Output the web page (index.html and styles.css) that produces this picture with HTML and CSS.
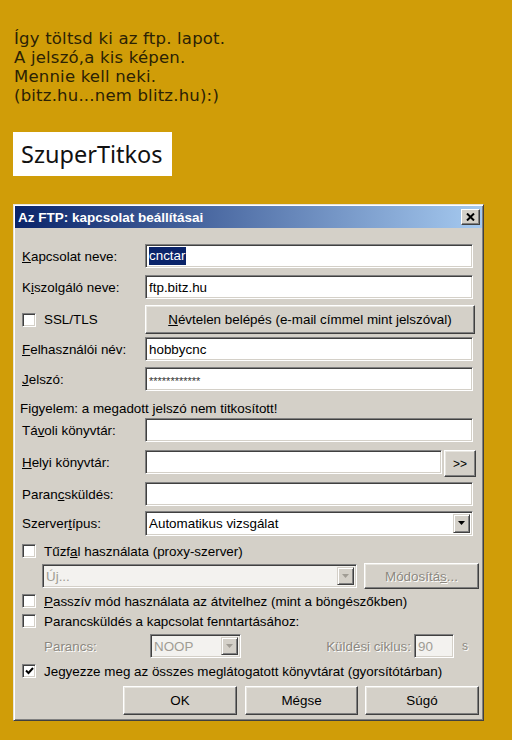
FILE: index.html
```html
<!DOCTYPE html>
<html lang="hu">
<head>
<meta charset="utf-8">
<title>FTP</title>
<link rel="stylesheet" href="styles.css">
</head>
<body>
<div class="intro">
  <p>Így töltsd ki az ftp. lapot.</p>
  <p>A jelszó,a kis képen.</p>
  <p>Mennie kell neki.</p>
  <p>(bitz.hu...nem blitz.hu):)</p>
</div>
<div class="secret">SzuperTitkos</div>

<div class="dialog">
  <div class="titlebar">
    <span class="title">Az FTP: kapcsolat beállításai</span>
    <span class="close"><svg width="9" height="8" viewBox="0 0 9 8"><path d="M1 0.5 L8 7.5 M8 0.5 L1 7.5" stroke="#000" stroke-width="2" fill="none"/></svg></span>
  </div>
  <div class="body">
    <div class="row mt0">
      <span class="lbl"><u>K</u>apcsolat neve:</span>
      <div class="field"><span class="sel">cnctar</span></div>
    </div>
    <div class="row mt7">
      <span class="lbl">K<u>i</u>szolgáló neve:</span>
      <div class="field">ftp.bitz.hu</div>
    </div>
    <div class="row mt6 h29">
      <span class="lbl cbl"><span class="cb"></span>SSL/TLS</span>
      <div class="btn wide"><span><u>N</u>évtelen belépés (e-mail címmel mint jelszóval)</span></div>
    </div>
    <div class="row mt3">
      <span class="lbl"><u>F</u>elhasználói név:</span>
      <div class="field">hobbycnc</div>
    </div>
    <div class="row mt6">
      <span class="lbl"><u>J</u>elszó:</span>
      <div class="field pw">************</div>
    </div>
    <div class="row mt9 h16">
      <span class="note">Figyelem: a megadott jelszó nem titkosított!</span>
    </div>
    <div class="row mt2">
      <span class="lbl">Tá<u>v</u>oli könyvtár:</span>
      <div class="field"></div>
    </div>
    <div class="row mt8 h27 top">
      <span class="lbl lblh"><u>H</u>elyi könyvtár:</span>
      <div class="field short h26"></div>
      <div class="btn more">&gt;&gt;</div>
    </div>
    <div class="row mt5">
      <span class="lbl">Paran<u>c</u>sküldés:</span>
      <div class="field"></div>
    </div>
    <div class="row mt5">
      <span class="lbl">Szerver<u>t</u>ípus:</span>
      <div class="combo server">
        <span class="ctext">Automatikus vizsgálat</span>
        <span class="arrow"><svg width="7" height="4" viewBox="0 0 7 4"><path d="M0 0 H7 L3.5 4 Z" fill="#000"/></svg></span>
      </div>
    </div>
    <div class="row mt8 h16">
      <span class="cb"></span><span>Tűzf<u>a</u>l használata (proxy-szerver)</span>
    </div>
    <div class="row mt4 h26 indent">
      <div class="combo proxy dis">
        <span class="ctext">Új...</span>
        <span class="arrow"><svg width="7" height="4" viewBox="0 0 7 4"><path d="M0 0 H7 L3.5 4 Z" fill="#a09c94"/></svg></span>
      </div>
      <div class="btn mod disabled"><span>Módosítá<u>s</u>...</span></div>
    </div>
    <div class="row mt4 h16">
      <span class="cb"></span><span><u>P</u>asszív mód használata az átvitelhez (mint a böngészőkben)</span>
    </div>
    <div class="row mt4 h16">
      <span class="cb"></span><span>Parancsküldés a kapcsolat fenntartásához:</span>
    </div>
    <div class="row mt5 parrow">
      <span class="plbl disabled">Parancs:</span>
      <div class="combo noop dis">
        <span class="ctext">NOOP</span>
        <span class="arrow"><svg width="7" height="4" viewBox="0 0 7 4"><path d="M0 0 H7 L3.5 4 Z" fill="#a09c94"/></svg></span>
      </div>
      <span class="klbl disabled">Küldési ciklus:</span>
      <div class="field cyc dis">90</div>
      <span class="sec disabled">s</span>
    </div>
    <div class="row mt5 h16">
      <span class="cb"><svg width="9" height="8" viewBox="0 0 9 8"><path d="M1 3.5 L3.5 6 L8 1" stroke="#000" stroke-width="2" fill="none"/></svg></span><span>Jegyezze meg az összes meglátogatott könyvtárat (<u>g</u>yorsítótárban)</span>
    </div>
    <div class="row mt7 h29 actions">
      <div class="btn ok">OK</div>
      <div class="btn cancel">Mégse</div>
      <div class="btn help">Súgó</div>
    </div>
  </div>
</div>
</body>
</html>
```

FILE: styles.css
```css
body {
  margin: 0;
  background: #d09d08;
  font-family: "Liberation Sans", Arial, sans-serif;
}

.intro {
  margin: 29px 0 0 14px;
  font: 16.5px/19px "DejaVu Sans", Verdana, sans-serif;
  letter-spacing: 0.2px;
  color: #2b2205;
}
.intro p { margin: 0; }

.secret {
  margin: 27px 0 0 13px;
  width: 159px;
  height: 44px;
  box-sizing: border-box;
  padding-left: 8px;
  background: #fff;
  display: flex;
  align-items: center;
  font: 23.5px "Noto Sans", "Open Sans", sans-serif;
  color: #111;
}

.dialog {
  margin: 28px 0 0 13px;
  width: 471px;
  height: 517px;
  box-sizing: border-box;
  background: #d4d0c8;
  border: 1px solid;
  border-color: #e6e3dc #404040 #404040 #e6e3dc;
  box-shadow: inset 1px 1px #fff, inset -1px -1px #808080;
  padding: 1px;
}

.titlebar {
  height: 22px;
  background: linear-gradient(to right, #0a246a, #a6caf0);
  display: flex;
  align-items: center;
  justify-content: space-between;
  padding: 0 2px 0 3px;
}
.title {
  color: #fff;
  font: bold 13.5px "Liberation Sans", Arial, sans-serif;
}
.close {
  width: 19px;
  height: 16px;
  box-sizing: border-box;
  background: #d4d0c8;
  border: 1px solid;
  border-color: #fff #404040 #404040 #fff;
  box-shadow: inset -1px -1px #808080;
  display: flex;
  align-items: center;
  justify-content: center;
}

.body {
  padding: 16px 0 0 7px;
  font-size: 13.4px;
  color: #000;
}

.row {
  display: flex;
  align-items: center;
  height: 24px;
}
.row.top { align-items: flex-start; }
.h16 { height: 16px; }
.h26 { height: 26px; }
.h27 { height: 27px; }
.h29 { height: 29px; }

.mt0 { margin-top: 0; }
.mt2 { margin-top: 2px; }
.mt3 { margin-top: 3px; }
.mt4 { margin-top: 4px; }
.mt5 { margin-top: 5px; }
.mt6 { margin-top: 6px; }
.mt7 { margin-top: 7px; }
.mt8 { margin-top: 8px; }
.mt9 { margin-top: 9px; }

.lbl {
  width: 123px;
  flex: none;
  white-space: nowrap;
}
.cbl { display: flex; align-items: center; }
.lblh { line-height: 26px; }

.field {
  width: 328px;
  height: 24px;
  flex: none;
  box-sizing: border-box;
  background: #fff;
  border: 1px solid;
  border-color: #808080 #fff #fff #808080;
  box-shadow: inset 1px 1px #404040, inset -1px -1px #d4d0c8;
  display: flex;
  align-items: center;
  padding-left: 3px;
  white-space: nowrap;
}
.field.short { width: 297px; }
.field.pw { font-size: 11px; padding-top: 3px; color: #333; }
.sel { background: #0a246a; color: #fff; padding: 1px 1px 2px 0; }

.note { margin-left: -2px; }

.cb {
  width: 14px;
  height: 14px;
  flex: none;
  box-sizing: border-box;
  background: #fff;
  border: 1px solid;
  border-color: #808080 #fff #fff #808080;
  box-shadow: inset 1px 1px #404040, inset -1px -1px #d4d0c8;
  margin-right: 8px;
  display: flex;
  align-items: center;
  justify-content: center;
}

.btn {
  box-sizing: border-box;
  background: #d4d0c8;
  border: 1px solid;
  border-color: #fff #404040 #404040 #fff;
  box-shadow: inset -1px -1px #808080, inset 1px 1px #e8e6e0;
  display: flex;
  align-items: center;
  justify-content: center;
  white-space: nowrap;
  height: 100%;
}
.btn.wide { width: 330px; }
.btn.more { width: 32px; height: 27px; margin-left: 2px; font-size: 12px; }
.btn.mod { width: 115px; margin-left: 7px; }

.combo {
  box-sizing: border-box;
  height: 25px;
  background: #fff;
  border: 1px solid;
  border-color: #808080 #fff #fff #808080;
  box-shadow: inset 1px 1px #404040, inset -1px -1px #d4d0c8;
  padding: 2px;
  display: flex;
  flex: none;
}
.combo .ctext {
  flex: 1;
  display: flex;
  align-items: center;
  padding-left: 1px;
  white-space: nowrap;
}
.arrow {
  width: 17px;
  flex: none;
  box-sizing: border-box;
  background: #d4d0c8;
  border: 1px solid;
  border-color: #d4d0c8 #404040 #404040 #d4d0c8;
  box-shadow: inset 1px 1px #fff, inset -1px -1px #808080;
  display: flex;
  align-items: center;
  justify-content: center;
}
.combo.server { width: 328px; }
.combo.proxy { width: 315px; height: 24px; }
.combo.noop { width: 91px; height: 24px; }
.combo.dis, .field.dis { background: #f3f2ef; color: #a09c94; }

.indent { padding-left: 20px; }

.disabled {
  color: #8c8880;
  text-shadow: 1px 1px #fff;
}

.parrow { padding-left: 22px; }
.plbl { width: 106px; flex: none; }
.klbl { width: 170px; flex: none; text-align: right; margin-right: 3px; }
.field.cyc { width: 40px; }
.sec { margin-left: 8px; font-size: 12px; }

.actions { padding-left: 101px; }
.btn.ok { width: 114px; }
.btn.cancel { width: 113px; margin-left: 8px; }
.btn.help { width: 114px; margin-left: 7px; }
```
